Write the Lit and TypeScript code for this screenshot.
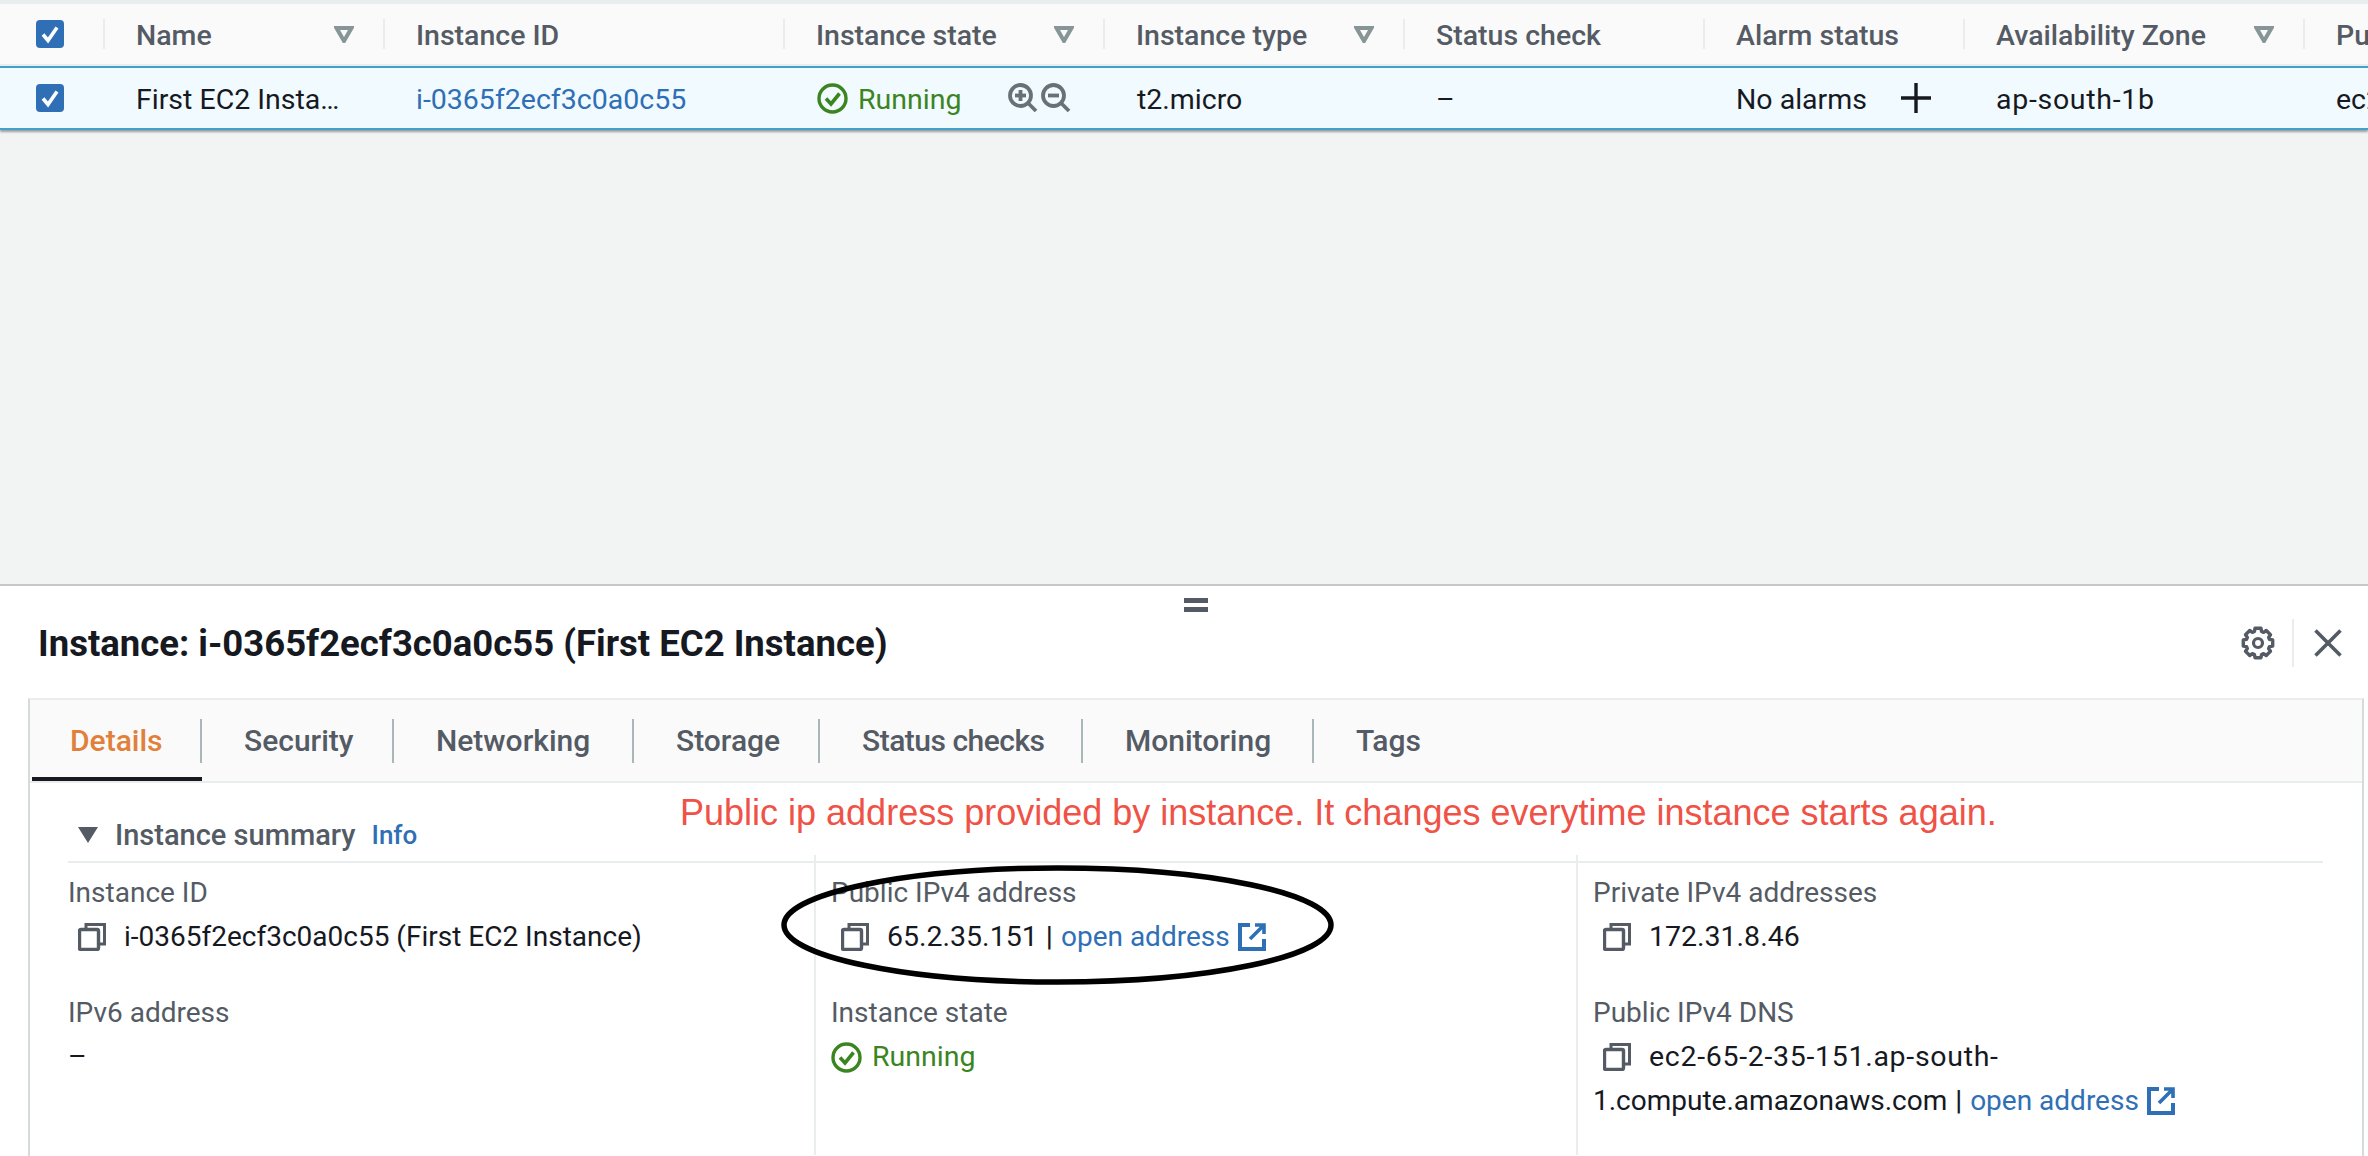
import { LitElement, html, css, svg } from "lit";
import { customElement } from "lit/decorators.js";

const tri = html`<svg class="tri" viewBox="0 0 20 17"><path d="M2.5 2 H17.5 L10 15 Z" fill="none" stroke="#879596" stroke-width="4" stroke-linejoin="miter"/></svg>`;
const chk = html`<svg class="cb" viewBox="0 0 28 28"><rect width="28" height="28" rx="4" fill="#2f6fb5"/><path d="M7 14.5 L12 20.5 L21 7.5" fill="none" stroke="#fff" stroke-width="3.6"/></svg>`;
const okIcon = html`<svg class="ok" viewBox="0 0 31 31"><circle cx="15.5" cy="15.5" r="13.5" fill="none" stroke="#3b8521" stroke-width="3.4"/><path d="M9 15.5 L14 21 L22.5 10.5" fill="none" stroke="#3b8521" stroke-width="3.6"/></svg>`;
const copy = html`<svg class="copy" viewBox="0 0 28 28"><path d="M8 6 V1.5 H26.5 V21 H21" fill="none" stroke="#545b64" stroke-width="3"/><rect x="1.5" y="6.5" width="19" height="20" rx="1.5" fill="none" stroke="#545b64" stroke-width="3.4"/></svg>`;
const ext = html`<svg class="ext" viewBox="0 0 28 28"><path d="M12 2 H2 V26 H26 V16" fill="none" stroke="#2f6fb5" stroke-width="4"/><path d="M17 2 H26 V11 M26 2 L12 16" fill="none" stroke="#2f6fb5" stroke-width="3.6"/></svg>`;
const mag = (plus: boolean) => html`<svg class="mag" viewBox="0 0 30 30"><circle cx="12.5" cy="12.5" r="10.5" fill="none" stroke="#687078" stroke-width="3.8"/><path d="M20 20 L28 28" stroke="#687078" stroke-width="3.8"/><path d="M7 12.5 H18" stroke="#687078" stroke-width="3.8"/>${plus ? svg`<path d="M12.5 7 V18" stroke="#687078" stroke-width="3.8"/>` : ""}</svg>`;

function gearPath(): string {
  const pts: string[] = [];
  const n = 8;
  for (let i = 0; i < n; i++) {
    const a = (i * 2 * Math.PI) / n;
    for (const [d, r] of [[-0.3, 12], [-0.2, 15], [0.2, 15], [0.3, 12]] as const) {
      const t = a + d;
      pts.push(`${(17 + r * Math.sin(t)).toFixed(2)} ${(17 - r * Math.cos(t)).toFixed(2)}`);
    }
  }
  return "M" + pts.join(" L") + " Z";
}

const heads: { t: string; f: boolean }[] = [
  { t: "Name", f: true },
  { t: "Instance ID", f: false },
  { t: "Instance state", f: true },
  { t: "Instance type", f: true },
  { t: "Status check", f: false },
  { t: "Alarm status", f: false },
  { t: "Availability Zone", f: true },
  { t: "Public", f: false },
];

const tabs = ["Details", "Security", "Networking", "Storage", "Status checks", "Monitoring", "Tags"];

@customElement("app-root")
export class AppRoot extends LitElement {
  static styles = css`
    :host { display: block; width: 2368px; height: 1156px; overflow: hidden; background: #f2f3f3; position: relative;
      font-family: Roboto, "Liberation Sans", sans-serif; font-size: 28.5px; color: #16191f; }
    svg { display: block; flex: none; }
    .grid { display: grid; grid-template-columns: 103px 280px 400px 320px 300px 300px 260px 340px 65px; }
    .thead { height: 60px; margin-top: 4px; background: #fafafa; box-shadow: 0 -4px 0 #eaeded; border-bottom: 2px solid #eaeded; box-sizing: content-box; font-weight: 500; color: #545b64; }
    .cell { display: flex; align-items: center; white-space: nowrap; overflow: hidden; }
    .box { padding-left: 36px; }
    .sep { width: 2px; height: 30px; background: #eaeded; margin-right: 31px; flex: none; }
    .h { flex: 1; padding-top: 2px; }
    .wide { letter-spacing: 0.7px; }
    .t { padding-top: 2px; }
    .tri { width: 20px; height: 17px; margin-right: 29px; }
    .tbody { height: 60px; background: #f1faff; border-top: 2px solid #44a0c8; border-bottom: 2px solid #44a0c8; box-shadow: 0 2px 2px rgba(84,91,100,.55); }
    .pad { padding-left: 33px; }
    .pad2 { padding-left: 34px; }
    .link { color: #2f6fb5; text-decoration: none; }
    .cb { width: 28px; height: 28px; }
    .ok { width: 31px; height: 31px; margin-right: 10px; }
    .green { color: #3b8521; }
    .mag { width: 30px; height: 30px; }
    .mags { display: flex; gap: 3px; margin-left: auto; margin-right: 32px; }
    .plus { width: 30px; height: 30px; margin-left: auto; margin-right: 32px; }
    .panel { position: absolute; left: 0; right: 0; top: 584px; bottom: 0; background: #fff; border-top: 2px solid #c4c8c9; }
    .handle { position: absolute; left: 1184px; top: 12px; width: 24px; height: 14px; border-top: 5px solid #545b64; border-bottom: 5px solid #545b64; box-sizing: border-box; }
    .title { height: 112px; padding-top: 2px; display: flex; align-items: center; padding-left: 38px; font-size: 36.5px; font-weight: 700; box-sizing: border-box; }
    .title span { flex: 1; }
    .gear { width: 34px; height: 34px; }
    .vsep { width: 2px; height: 48px; background: #eaeded; margin: 0 20px 0 17px; }
    .x { width: 28px; height: 28px; margin-right: 26px; }
    .tabsbox { margin: 0 4px 0 28px; border: 2px solid #d5dbdb; border-bottom: 0; border-top-color: #eaeded; height: 460px; box-sizing: border-box; position: relative; }
    .tabs { height: 81px; background: #fafafa; border-bottom: 2px solid #eaeded; display: grid; grid-template-columns: 2px 170px 192px 240px 186px 263px 231px 200px; box-sizing: content-box; color: #545b64; font-weight: 500; font-size: 30px; }
    .tab { display: flex; align-items: center; height: 81px; box-sizing: border-box; white-space: nowrap; }
    .tab span { padding-left: 42px; flex: 1; }
    .tab i { width: 2px; height: 44px; background: #aab7b8; flex: none; }
    .tab.first span { padding-left: 38px; padding-top: 4px; color: #e0803a; }
    .tab.first i { margin-top: 4px; }
    .tight { letter-spacing: -0.5px; }
    .active { border-bottom: 4px solid #16191f; }
    .sum { height: 52px; padding-top: 26px; margin-left: 38px; margin-right: 39px; border-bottom: 2px solid #eaeded; display: flex; align-items: center; box-sizing: content-box; font-weight: 500; color: #545b64; font-size: 29px; }
    .sum svg { width: 20px; height: 16px; margin: 0 17px 0 10px; }
    .sum .link { font-size: 26px; font-weight: 500; margin-left: 16px; }
    .cols { margin-left: 38px; margin-right: 39px; display: grid; grid-template-columns: 746px 762px 1fr; margin-top: -8px; }
    .col { padding-top: 16px; height: 300px; box-sizing: border-box; }
    .col + .col { border-left: 2px solid #eaeded; padding-left: 15px; }
    .label { line-height: 44px; color: #545b64; font-size: 28px; }
    .val { line-height: 44px; margin-bottom: 32px; }
    .row { display: flex; align-items: center; white-space: nowrap; }
    .copy { width: 28px; height: 28px; margin: 0 18px 0 10px; }
    .ext { width: 28px; height: 28px; margin-left: 8px; }
    .bar { margin: 0 1px; color: #16191f; font-weight: 500; }
    .s28 { font-size: 28px; }
    .note { position: absolute; left: 680px; top: 205px; font-family: "Liberation Sans", sans-serif; font-size: 36px; line-height: 44px; color: #ef5246; white-space: nowrap; }
    .ring { position: absolute; left: 781px; top: 279px; width: 553px; height: 120px; }
  `;

  render() {
    const gear = gearPath();
    return html`
      <div class="grid thead">
        <div class="cell box">${chk}</div>
        ${heads.map(
          (h) => html`<div class="cell"><div class="sep"></div><span class="h">${h.t}</span>${h.f ? tri : ""}</div>`
        )}
      </div>
      <div class="grid tbody">
        <div class="cell box">${chk}</div>
        <div class="cell pad"><span class="t">First EC2 Insta…</span></div>
        <div class="cell pad"><span class="link t">i-0365f2ecf3c0a0c55</span></div>
        <div class="cell pad2">${okIcon}<span class="green t">Running</span><span class="mags">${mag(true)}${mag(false)}</span></div>
        <div class="cell pad2"><span class="t">t2.micro</span></div>
        <div class="cell pad"><span class="t">–</span></div>
        <div class="cell pad"><span class="t">No alarms</span><svg class="plus" viewBox="0 0 30 30"><path d="M0 15 H30 M15 0 V30" stroke="#16191f" stroke-width="3.4"/></svg></div>
        <div class="cell pad"><span class="t wide">ap-south-1b</span></div>
        <div class="cell pad"><span class="t">ec2</span></div>
      </div>
      <div class="panel">
        <div class="handle"></div>
        <div class="title">
          <span>Instance: i-0365f2ecf3c0a0c55 (First EC2 Instance)</span>
          <svg class="gear" viewBox="0 0 34 34"><path d="${gear}" fill="none" stroke="#545b64" stroke-width="3.4" stroke-linejoin="round"/><circle cx="17" cy="17" r="4.5" fill="none" stroke="#545b64" stroke-width="3.2"/></svg>
          <div class="vsep"></div>
          <svg class="x" viewBox="0 0 28 28"><path d="M1.5 1.5 L26.5 26.5 M26.5 1.5 L1.5 26.5" stroke="#545b64" stroke-width="3.6"/></svg>
        </div>
        <div class="tabsbox">
          <div class="tabs">
            <div></div>
            ${tabs.map(
              (t, i) => html`<div class="tab ${i === 0 ? "first active" : ""}"><span class="${i === 4 ? "tight" : ""}">${t}</span>${i < 6 ? html`<i></i>` : ""}</div>`
            )}
          </div>
          <div class="sum">
            <svg viewBox="0 0 20 16"><path d="M0 0 H20 L10 16 Z" fill="#545b64"/></svg>
            Instance summary <span class="link">Info</span>
          </div>
          <div class="cols">
            <div class="col">
              <div class="label">Instance ID</div>
              <div class="val row">${copy}<span class="s28">i-0365f2ecf3c0a0c55 (First EC2 Instance)</span></div>
              <div class="label">IPv6 address</div>
              <div class="val">–</div>
            </div>
            <div class="col">
              <div class="label">Public IPv4 address</div>
              <div class="val row">${copy}<span>65.2.35.151 <span class="bar">|</span> <span class="link s28">open address</span></span>${ext}</div>
              <div class="label">Instance state</div>
              <div class="val row">${okIcon}<span class="green">Running</span></div>
            </div>
            <div class="col">
              <div class="label">Private IPv4 addresses</div>
              <div class="val row">${copy}<span>172.31.8.46</span></div>
              <div class="label">Public IPv4 DNS</div>
              <div class="val">
                <div class="row">${copy}<span class="wide">ec2-65-2-35-151.ap-south-</span></div>
                <div class="row"><span class="s28">1.compute.amazonaws.com <span class="bar">|</span> <span class="link">open address</span></span>${ext}</div>
              </div>
            </div>
          </div>
        </div>
        <div class="note">Public ip address provided by instance. It changes everytime instance starts again.</div>
        <svg class="ring" viewBox="0 0 553 120"><ellipse cx="276.5" cy="60" rx="273.5" ry="57" fill="none" stroke="#000" stroke-width="5.5"/></svg>
      </div>
    `;
  }
}
